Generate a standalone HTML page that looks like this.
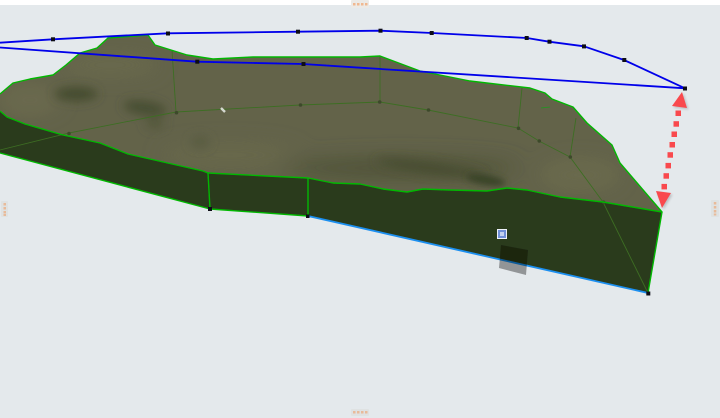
<!DOCTYPE html>
<html>
<head>
<meta charset="utf-8">
<style>
html,body{margin:0;padding:0;width:720px;height:418px;overflow:hidden;background:#e4e9ec}
svg{display:block}
</style>
</head>
<body>
<svg width="720" height="418" viewBox="0 0 720 418" xmlns="http://www.w3.org/2000/svg">
<defs>
<filter id="soft" x="0" y="0" width="100%" height="100%"><feGaussianBlur stdDeviation="0.3"/></filter>
<filter id="b6" x="-50%" y="-50%" width="200%" height="200%"><feGaussianBlur stdDeviation="5"/></filter>
<filter id="b3" x="-50%" y="-50%" width="200%" height="200%"><feGaussianBlur stdDeviation="3.5"/></filter>
<filter id="b12" x="-50%" y="-50%" width="200%" height="200%"><feGaussianBlur stdDeviation="10"/></filter>
<filter id="b1" x="-50%" y="-50%" width="200%" height="200%"><feGaussianBlur stdDeviation="1.2"/></filter>
<clipPath id="top"><path d="M0,94 L13,83 L30,79 L53,75 L66,65 L80,53 L97,48 L108,38 L148,35 L155,45 L187,55 L213,59 L253,57 L300,57 L360,57 L380,56 L420,71 L470,81 L530,88 L545,93 L552,99 L573,107 L587,123 L612,145 L620,163 L662,212 L603,202 L560,197 L527,190 L507,188 L487,191 L450,190 L423,189 L407,192 L383,189 L360,184 L333,183 L308,178 L267,176 L208,173 L203,171 L128,154 L100,143 L63,135 L25,124 L7,117 L0,111 Z"/></clipPath>
</defs>

<g filter="url(#soft)">
<rect width="720" height="418" fill="#e4e9ec"/>
<rect width="720" height="5" fill="#ffffff"/>

<!-- sides -->
<path d="M0,111 L7,117 L25,124 L63,135 L100,143 L128,154 L203,171 L208,173 L267,176 L308,178 L333,183 L360,184 L383,189 L407,192 L423,189 L450,190 L487,191 L507,188 L527,190 L560,197 L603,202 L662,212 L648,293 L308,216 L210,209 L0,153 Z" fill="#2a3a1c"/>

<!-- terrain -->
<g clip-path="url(#top)">
<rect width="720" height="240" fill="#63634a"/>
<g filter="url(#b12)">
<ellipse cx="30" cy="100" rx="30" ry="12" fill="#6c6b50"/>
<ellipse cx="110" cy="65" rx="50" ry="10" fill="#69694d"/>
<ellipse cx="230" cy="155" rx="70" ry="12" fill="#68684c"/>
<ellipse cx="580" cy="175" rx="40" ry="14" fill="#6a6a4e"/>
<ellipse cx="400" cy="168" rx="120" ry="11" fill="#4f5339"/>
</g>
<g filter="url(#b6)">
<ellipse cx="76" cy="94" rx="22" ry="7" fill="#444b2d"/>
<ellipse cx="145" cy="108" rx="22" ry="7" fill="#474d30" transform="rotate(8 145 108)"/>
<ellipse cx="155" cy="124" rx="10" ry="5" fill="#52573a"/>
<ellipse cx="200" cy="142" rx="10" ry="6" fill="#585c41"/>
<ellipse cx="430" cy="168" rx="55" ry="6" fill="#484e31" transform="rotate(8 430 168)"/>
</g>
<g filter="url(#b3)">
<ellipse cx="486" cy="180" rx="20" ry="5" fill="#394225" transform="rotate(10 486 180)"/>
</g>
</g>

<!-- hidden wireframe -->
<g fill="none" stroke="#3d6e24" stroke-width="0.9">
<path d="M0,150 L69,133 L176,112 L300,105 L380,102 L428,110 L518,128 L539,141 L570,157 L603,202 L648,293"/>
<path d="M172,50 L176,112"/>
<path d="M380,56 L380,102"/>
<path d="M522,88 L518,128"/>
<path d="M576,118 L570,157"/>
</g>
<g fill="#3c4a2c">
<circle cx="69" cy="133.500" r="1.800"/><circle cx="176.500" cy="112.700" r="1.800"/><circle cx="300.500" cy="105" r="1.800"/>
<circle cx="379.700" cy="102" r="1.800"/><circle cx="428.500" cy="110" r="1.800"/><circle cx="518.500" cy="128.300" r="1.800"/>
<circle cx="539.300" cy="141" r="1.800"/><circle cx="570.300" cy="157" r="1.800"/><circle cx="603.700" cy="202.300" r="1.800"/>
</g>
<path d="M541,108 L550,107" stroke="#1f9a1f" stroke-width="0.8" fill="none"/>
<path d="M221,108 L225,112" stroke="#d5d8cf" stroke-width="2.400" fill="none"/>

<!-- green outlines -->
<g fill="none" stroke="#05b805" stroke-width="1.400" stroke-linejoin="round">
<path d="M0,94 L13,83 L30,79 L53,75 L66,65 L80,53 L97,48 L108,38 L148,35 L155,45 L187,55 L213,59 L253,57 L300,57 L360,57 L380,56 L420,71 L470,81 L530,88 L545,93 L552,99 L573,107 L587,123 L612,145 L620,163 L662,212 L603,202 L560,197 L527,190 L507,188 L487,191 L450,190 L423,189 L407,192 L383,189 L360,184 L333,183 L308,178 L267,176 L208,173 L203,171 L128,154 L100,143 L63,135 L25,124 L7,117 L0,111"/>
<path d="M0,153 L210,209 L308,216"/>
<path d="M208,173 L210,209"/>
<path d="M308,178 L308,216"/>
<path d="M662,212 L648,293"/>
</g>
<path d="M308,216 L648,293" fill="none" stroke="#1a8ff0" stroke-width="1.800"/>

<!-- little square shadow -->
<path d="M501,245 L528,250 L526,275 L499,268 Z" fill="#000" opacity=".36"/>

<!-- icon -->
<rect x="497.500" y="229.500" width="9" height="9" fill="#6f8fd8" stroke="#eef1fa" stroke-width="1"/>
<rect x="500" y="232" width="4" height="4" fill="#c4d2f0"/>

<!-- blue polyline -->
<path d="M0,42.700 L53,39.300 L168,33.300 L298,31.700 L380,30.700 L432,33 L527,38 L549,41.700 L584,46.300 L624,60 L685,88.300 L360,67.700 L303,64 L197,61.700 L0,47.500" fill="none" stroke="#0000ea" stroke-width="1.800" stroke-linejoin="round"/>
<g fill="#0a0a14">
<rect x="51" y="37.300" width="4" height="4"/><rect x="166" y="31.500" width="4" height="4"/><rect x="296" y="29.700" width="4" height="4"/>
<rect x="378.500" y="28.700" width="4" height="4"/><rect x="429.700" y="31" width="4" height="4"/><rect x="524.700" y="36" width="4" height="4"/>
<rect x="547.500" y="39.700" width="4" height="4"/><rect x="582" y="44.400" width="4" height="4"/><rect x="622.300" y="58" width="4" height="4"/>
<rect x="683" y="86.500" width="4" height="4"/><rect x="195.300" y="59.700" width="4" height="4"/><rect x="301.500" y="62" width="4" height="4"/>
<rect x="208" y="207" width="4" height="4"/><rect x="306" y="214.500" width="3.500" height="3.500"/><rect x="646.300" y="291.500" width="4" height="4"/>
</g>

<!-- red arrow shadow -->
<g fill="#000" opacity=".18" filter="url(#b1)" transform="translate(1.500,1.500)">
<path d="M682,92 L672,106 L687,108 Z"/><path d="M656,191 L671,193 L662,208 Z"/>
</g>
<g fill="#f94a4e">
<path d="M682,92 L672,106 L687,108 Z"/>
<path d="M656,191 L671,193 L662,208 Z"/>
<rect x="675.500" y="110.500" width="5.500" height="5.500"/><rect x="673.500" y="121.200" width="5.500" height="5.500"/>
<rect x="671.500" y="131.500" width="5.500" height="5.500"/><rect x="669.500" y="142" width="5.500" height="5.500"/>
<rect x="667.500" y="152.200" width="5.500" height="5.500"/><rect x="665.500" y="162.900" width="5.500" height="5.500"/>
<rect x="663.500" y="173.200" width="5.500" height="5.500"/><rect x="661.500" y="183.900" width="5.500" height="5.500"/>
</g>

<!-- handles -->
<g>
<rect x="351" y="0" width="18" height="8" rx="1" fill="#eceae6"/>
<g fill="#f0b890"><rect x="353" y="3" width="2.500" height="2.500"/><rect x="357" y="3" width="2.500" height="2.500"/><rect x="361" y="3" width="2.500" height="2.500"/><rect x="365" y="3" width="2.500" height="2.500"/></g>
<rect x="351" y="409" width="18" height="7" rx="1" fill="#dfe2e2"/>
<g fill="#e8bb9a"><rect x="353" y="411" width="2.500" height="2.500"/><rect x="357" y="411" width="2.500" height="2.500"/><rect x="361" y="411" width="2.500" height="2.500"/><rect x="365" y="411" width="2.500" height="2.500"/></g>
<rect x="1" y="201" width="7" height="16" rx="1" fill="#dfe2e2"/>
<g fill="#e8bb9a"><rect x="3.500" y="203" width="2.500" height="2.500"/><rect x="3.500" y="207" width="2.500" height="2.500"/><rect x="3.500" y="211" width="2.500" height="2.500"/><rect x="3.500" y="214" width="2.500" height="2"/></g>
<rect x="711" y="200" width="8" height="17" rx="1" fill="#dfe2e2"/>
<g fill="#e8bb9a"><rect x="713.800" y="202" width="2.500" height="2.500"/><rect x="713.800" y="206" width="2.500" height="2.500"/><rect x="713.800" y="210" width="2.500" height="2.500"/><rect x="713.800" y="213.500" width="2.500" height="2"/></g>
</g>
</g>
</svg>
</body>
</html>
